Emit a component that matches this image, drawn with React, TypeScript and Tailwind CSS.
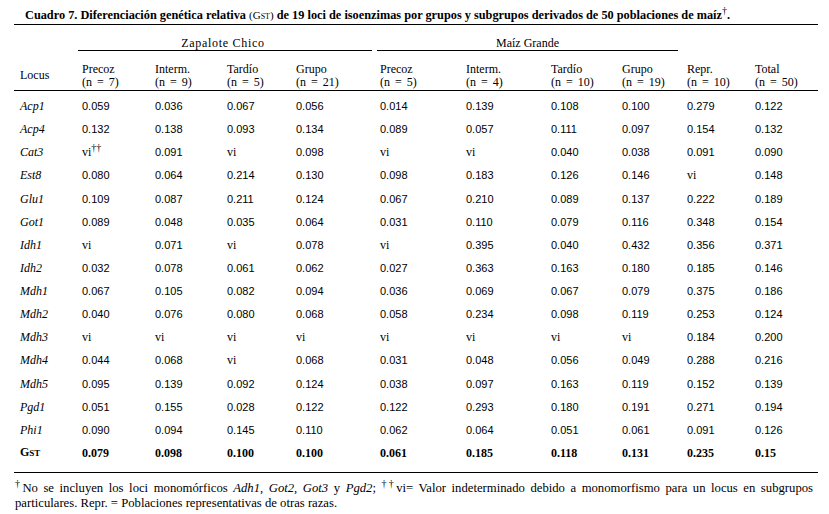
import React from "react";

const COLS =
  "grid grid-cols-[64px_73px_72px_69px_84px_86px_85px_71px_65px_68px_67px]";

type Row = { label: string; vals: string[] };

const rows: Row[] = [
  { label: "Acp1", vals: ["0.059", "0.036", "0.067", "0.056", "0.014", "0.139", "0.108", "0.100", "0.279", "0.122"] },
  { label: "Acp4", vals: ["0.132", "0.138", "0.093", "0.134", "0.089", "0.057", "0.111", "0.097", "0.154", "0.132"] },
  { label: "Cat3", vals: ["vi††", "0.091", "vi", "0.098", "vi", "vi", "0.040", "0.038", "0.091", "0.090"] },
  { label: "Est8", vals: ["0.080", "0.064", "0.214", "0.130", "0.098", "0.183", "0.126", "0.146", "vi", "0.148"] },
  { label: "Glu1", vals: ["0.109", "0.087", "0.211", "0.124", "0.067", "0.210", "0.089", "0.137", "0.222", "0.189"] },
  { label: "Got1", vals: ["0.089", "0.048", "0.035", "0.064", "0.031", "0.110", "0.079", "0.116", "0.348", "0.154"] },
  { label: "Idh1", vals: ["vi", "0.071", "vi", "0.078", "vi", "0.395", "0.040", "0.432", "0.356", "0.371"] },
  { label: "Idh2", vals: ["0.032", "0.078", "0.061", "0.062", "0.027", "0.363", "0.163", "0.180", "0.185", "0.146"] },
  { label: "Mdh1", vals: ["0.067", "0.105", "0.082", "0.094", "0.036", "0.069", "0.067", "0.079", "0.375", "0.186"] },
  { label: "Mdh2", vals: ["0.040", "0.076", "0.080", "0.068", "0.058", "0.234", "0.098", "0.119", "0.253", "0.124"] },
  { label: "Mdh3", vals: ["vi", "vi", "vi", "vi", "vi", "vi", "vi", "vi", "0.184", "0.200"] },
  { label: "Mdh4", vals: ["0.044", "0.068", "vi", "0.068", "0.031", "0.048", "0.056", "0.049", "0.288", "0.216"] },
  { label: "Mdh5", vals: ["0.095", "0.139", "0.092", "0.124", "0.038", "0.097", "0.163", "0.119", "0.152", "0.139"] },
  { label: "Pgd1", vals: ["0.051", "0.155", "0.028", "0.122", "0.122", "0.293", "0.180", "0.191", "0.271", "0.194"] },
  { label: "Phi1", vals: ["0.090", "0.094", "0.145", "0.110", "0.062", "0.064", "0.051", "0.061", "0.091", "0.126"] },
];

const gst = ["0.079", "0.098", "0.100", "0.100", "0.061", "0.185", "0.118", "0.131", "0.235", "0.15"];

const headers: [string, string][] = [
  ["Precoz", "(n = 7)"],
  ["Interm.", "(n = 9)"],
  ["Tardío", "(n = 5)"],
  ["Grupo", "(n = 21)"],
  ["Precoz", "(n = 5)"],
  ["Interm.", "(n = 4)"],
  ["Tardío", "(n = 10)"],
  ["Grupo", "(n = 19)"],
  ["Repr.", "(n = 10)"],
  ["Total", "(n = 50)"],
];

function Cell({ v }: { v: string }) {
  if (v.startsWith("vi")) {
    return (
      <div className="pl-1 text-[12px] font-['Liberation_Serif',serif]">
        vi{v.length > 2 ? <sup className="text-[10px]">††</sup> : null}
      </div>
    );
  }
  return <div className="pl-1 text-[11px] font-['Liberation_Sans',sans-serif]">{v}</div>;
}

export default function App() {
  return (
    <div className="w-[829px] h-[514px] bg-white text-black font-['Liberation_Serif',serif] px-[14px] overflow-hidden">
      <div className="w-[804px]">
        {/* Title */}
        <div className="h-[25px] border-b border-black pl-[11px] pt-[8px] text-[12.3px] leading-[14px] font-bold whitespace-nowrap">
          Cuadro 7. Diferenciación genética relativa{" "}
          <span className="font-normal text-[11px]">
            (G<span className="text-[8px]">ST</span>)
          </span>{" "}
          de 19 loci de isoenzimas por grupos y subgrupos derivados de 50 poblaciones de maíz
          <sup className="text-[10px] font-normal">†</sup>.
        </div>

        {/* Group header */}
        <div className={`${COLS} h-[26px] text-[12px] leading-[14px]`}>
          <div />
          <div className="col-span-4 pt-[11px] mr-[4px]">
            <div className="border-b border-black text-center pr-[4px] tracking-[0.7px]">Zapalote Chico</div>
          </div>
          <div className="col-span-4 pt-[11px] ml-[1px] mr-[5px]">
            <div className="border-b border-black text-center">Maíz Grande</div>
          </div>
        </div>

        {/* Column headers */}
        <div className={`${COLS} h-[40px] border-b border-black text-[12px] leading-[13px]`}>
          <div className="pl-[6px] pt-[18px]">Locus</div>
          {headers.map(([a, b], i) => (
            <div key={i} className="pl-1 pt-[12px] whitespace-nowrap">
              <div>{a}</div>
              <div className="[word-spacing:2px]">{b}</div>
            </div>
          ))}
        </div>

        {/* Body */}
        <div className="pt-[3.5px] pb-[7px] border-b border-black">
          {rows.map((r) => (
            <div key={r.label} className={`${COLS} h-[23.13px] items-center leading-[14px]`}>
              <div className="pl-[6px] italic text-[12px]">{r.label}</div>
              {r.vals.map((v, i) => (
                <Cell key={i} v={v} />
              ))}
            </div>
          ))}
          <div className={`${COLS} h-[23.13px] items-center leading-[14px] font-bold text-[12px]`}>
            <div className="pl-[6px]">
              G<span className="text-[9px]">ST</span>
            </div>
            {gst.map((v, i) => (
              <div key={i} className="pl-1">
                {v}
              </div>
            ))}
          </div>
        </div>

        {/* Footnote */}
        <div className="pt-[8px] pl-[1px] pr-[5px] text-[12.7px] leading-[15px]">
          <div className="text-justify [text-align-last:justify]">
            <sup className="text-[10px]">†</sup>No se incluyen los loci monomórficos <i>Adh1</i>, <i>Got2</i>,{" "}
            <i>Got3</i> y <i>Pgd2</i>; <sup className="text-[10px]">††</sup>vi= Valor indeterminado debido a
            monomorfismo para un locus en subgrupos
          </div>
          <div>particulares. Repr. = Poblaciones representativas de otras razas.</div>
        </div>
      </div>
    </div>
  );
}
